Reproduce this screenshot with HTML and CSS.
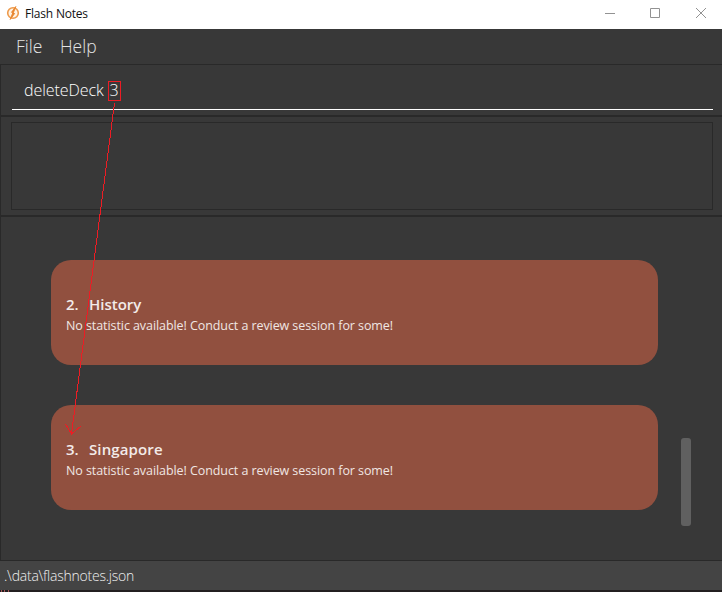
FILE: index.html
```
<!DOCTYPE html>
<html lang="en">
<head>
<meta charset="utf-8">
<title>Flash Notes</title>
<link rel="stylesheet" href="styles.css">
</head>
<body>
<div class="window">
  <header class="titlebar">
    <svg class="logo" width="14" height="14" viewBox="0 0 14 14">
      <circle cx="7" cy="7" r="5.3" fill="#fff4e6" stroke="#ee9a4b" stroke-width="1.6"/>
      <path d="M9.800.5 5.500 6.300 6.700 7 4.200 13.500 8.600 7.500 7.400 6.700z" fill="#e8842c" stroke="#e8842c" stroke-width=".9"/>
    </svg>
    <span class="title">Flash Notes</span>
    <svg class="controls" width="110" height="29" viewBox="0 0 110 29" fill="none" stroke="#929292">
      <path d="M0 13.5h10M45.500 8.500h9v9h-9zM91 8l10 10M101 8l-10 10"/>
    </svg>
  </header>
  <nav class="menu"><span class="file">File</span><span class="help">Help</span></nav>
  <section class="command">
    <div class="field"><span class="word">deleteDeck</span><span class="index">3</span></div>
  </section>
  <section class="result"><div class="display"></div></section>
  <main class="decks">
    <div class="list">
      <article class="card">
        <h2><span class="num">2.</span><span class="history">History</span></h2>
        <p>No statistic available! Conduct a review session for some!</p>
      </article>
      <article class="card">
        <h2><span class="num">3.</span><span class="singapore">Singapore</span></h2>
        <p>No statistic available! Conduct a review session for some!</p>
      </article>
    </div>
    <div class="thumb"></div>
  </main>
  <footer class="status"><span class="path">.\data\flashnotes.json</span></footer>
  <svg class="arrow" width="722" height="592" viewBox="0 0 722 592" fill="none" stroke="#ed1c24" shape-rendering="crispEdges">
    <path d="M114.500 103 71.500 434M65.500 424l6 10 9.500-8"/>
    <path stroke="#a35355" d="M1.500 590v2M4.500 590v2M8.500 590v2"/>
  </svg>
</div>
</body>
</html>
```
FILE: styles.css
```
* { box-sizing: border-box; }
body { margin: 0; font-family: "Open Sans", "Noto Sans", sans-serif; }
.window { position: relative; width: 722px; height: 592px; display: flex; flex-direction: column; background: #383838; overflow: hidden; white-space: nowrap; }
.titlebar { height: 29px; flex: none; display: flex; align-items: flex-start; background: #fff; padding-left: 6px; }
.logo { margin-top: 6px; }
.title { margin-left: 5px; font-size: 12px; line-height: 27px; color: #111; letter-spacing: -.2px; }
.controls { margin-left: auto; margin-right: 7px; }
.menu { height: 35px; flex: none; display: flex; gap: 18px; padding-left: 16px; font-size: 17.500px; font-weight: 300; line-height: 35px; color: #e4e4e4; }
.file { width: 26px; }
.command { height: 52px; flex: none; border: 1px solid #292929; border-right-width: 0; padding: 4px 9px 0 11px; }
.field { height: 41px; border-bottom: 1px solid #fff; display: flex; align-items: flex-start; padding: 11px 0 0 12px; color: #fff; font-size: 16px; font-weight: 300; line-height: 20px; }
.word { width: 84px; letter-spacing: -.05px; }
.index { width: 13px; height: 20px; border: 1px solid #ed1c24; line-height: 16px; text-align: center; text-indent: -1px; margin-top: 1px; }
.result { height: 100px; flex: none; border: 1px solid #292929; border-right-width: 0; padding: 5px 9px 0 10px; }
.display { height: 88px; border: 1px solid #292929; }
.decks { height: 344px; flex: none; display: flex; border: solid #292929; border-width: 1px 0 0 1px; }
.list { width: 607px; margin: 43px 0 0 50px; display: flex; flex-direction: column; gap: 40px; }
.card { height: 105px; border-radius: 20px; background: #91503f; padding: 33px 15px 0; color: #f3ebe9; }
.card h2 { margin: 0 0 1px; display: flex; font-size: 15px; font-weight: 600; line-height: 22px; }
.num { width: 23px; }
.singapore { letter-spacing: .12px; }
.card p { margin: 0; font-size: 12.500px; line-height: 19px; letter-spacing: -.075px; color: #f0e6e3; }
.thumb { width: 10px; height: 88px; margin: 221px 0 0 23px; border-radius: 3px; background: #606060; }
.status { height: 32px; flex: none; background: #444; border-top: 1px solid #292929; border-bottom: 2px solid #231f20; padding-left: 4px; font-size: 14px; font-weight: 300; line-height: 30px; letter-spacing: -.23px; color: #f0f0f0; }
.arrow { position: absolute; left: 0; top: 0; pointer-events: none; }
```
